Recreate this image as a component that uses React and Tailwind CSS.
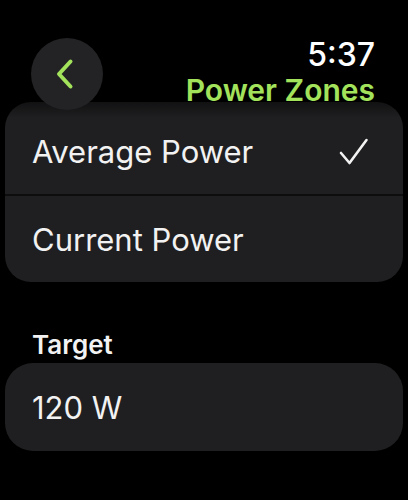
import React from 'react';

const font = { fontFamily: 'Inter, "Noto Sans", sans-serif' };

const BackButton = () => (
    <div className="w-[72px] h-[72px] rounded-full bg-[#232325] flex items-center justify-center">
        <svg width="20" height="32" viewBox="0 0 20 32" fill="none" className="mr-[5px]">
            <path d="M15.5 3.5 L4 16 L15.5 28.5" stroke="#a3e35c" strokeWidth="4" strokeLinecap="round" strokeLinejoin="round" />
        </svg>
    </div>
);

const Check = () => (
    <svg width="30" height="28" viewBox="0 0 30 28" fill="none">
        <path d="M2 15 L10.5 25 L27.5 2" stroke="#f2f2f2" strokeWidth="2.6" strokeLinecap="round" strokeLinejoin="round" />
    </svg>
);

const App = () => {
    return (
        <div style={font} className="relative w-[408px] h-[500px] bg-black overflow-hidden text-[#f2f2f2]">
            {/* header */}
            <div className="relative z-20 flex justify-between pl-[31px] pr-[33px] pt-[38px] h-[102px]">
                <BackButton />
                <div className="flex flex-col items-end">
                    <span className="text-[32px] leading-[34px] font-medium text-white">5:37</span>
                    <span className="text-[30px] leading-[36px] font-semibold text-[#a3e35c]">Power Zones</span>
                </div>
            </div>

            {/* top fade */}
            <div className="absolute z-10 left-0 right-0 top-[82px] h-[36px] bg-gradient-to-b from-black to-transparent" />

            <div className="mx-[5px] rounded-[26px] bg-[#1f1f21] overflow-hidden">
                <div className="h-[92px] flex items-center justify-between pl-[27px] pr-[34px] pt-[7px]">
                    <span className="text-[31px] leading-[38px]">Average Power</span>
                    <Check />
                </div>
                <div className="h-[2px] bg-[#0d0d0d]" />
                <div className="h-[86px] flex items-center pl-[27px] pt-[2px]">
                    <span className="text-[31px] leading-[38px]">Current Power</span>
                </div>
            </div>

            <div className="pl-[32px] pt-[49px] h-[81px]">
                <span className="text-[26px] leading-[28px] font-semibold">Target</span>
            </div>

            <div className="mx-[5px] h-[88px] rounded-[28px] bg-[#1f1f21] flex items-center pl-[27px] pt-[2px]">
                <span className="text-[31px] leading-[38px]">120 W</span>
            </div>
        </div>
    );
};

export default App;
